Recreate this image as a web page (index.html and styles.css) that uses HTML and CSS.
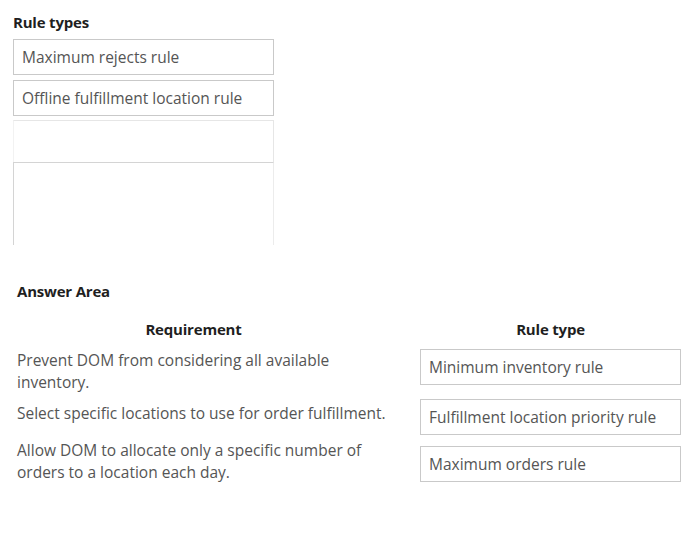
FILE: index.html
```html
<!DOCTYPE html>
<html>
<head>
<meta charset="utf-8">
<link rel="stylesheet" href="styles.css">
</head>
<body>
<div class="page">
  <section class="pool">
    <h2 class="title">Rule types</h2>
    <div class="slots">
      <div class="box">Maximum rejects rule</div>
      <div class="box">Offline fulfillment location rule</div>
      <div class="box empty faint"></div>
      <div class="box empty tall"></div>
    </div>
  </section>

  <section class="answer">
    <h2 class="title answer-title">Answer Area</h2>
    <div class="grid">
      <div class="col-head req-head">Requirement</div>
      <div class="col-head">Rule type</div>

      <div class="req r1">Prevent DOM from considering all available inventory.</div>
      <div class="box">Minimum inventory rule</div>

      <div class="req r2">Select specific locations to use for order fulfillment.</div>
      <div class="box">Fulfillment location priority rule</div>

      <div class="req r3">Allow DOM to allocate only a specific number of orders to a location each day.</div>
      <div class="box">Maximum orders rule</div>
    </div>
  </section>
</div>
</body>
</html>
```

FILE: styles.css
```css
html, body {
  margin: 0;
  padding: 0;
  background: #ffffff;
}
body {
  font-family: "Open Sans", "Noto Sans", "Liberation Sans", sans-serif;
  color: #555555;
  width: 700px;
  height: 544px;
  overflow: hidden;
}
.page {
  padding: 12px 0 0 13px;
}
.title {
  margin: 0;
  font-size: 15px;
  font-weight: 700;
  color: #1f1f1f;
  line-height: 20px;
  letter-spacing: -0.2px;
}
.slots {
  margin-top: 7px;
  width: 261px;
  display: flex;
  flex-direction: column;
  gap: 5px;
}
.box {
  box-sizing: border-box;
  height: 36px;
  border: 1px solid #c9c9c9;
  padding: 0 0 0 8px;
  display: flex;
  align-items: center;
  font-size: 15.5px;
  color: #555555;
  white-space: nowrap;
}
.slots .faint {
  height: 42px;
  margin-top: -1px;
  border-color: #e6e6e6;
  border-left-color: #f2f2f2;
  border-bottom: none;
}
.slots .tall {
  height: 83px;
  margin-top: -5px;
  border-color: #d4d4d4;
  border-bottom: none;
  border-right-color: #ececec;
}
.answer {
  margin-top: 36px;
  padding-left: 4px;
}
.grid {
  margin-top: 20px;
  display: grid;
  grid-template-columns: 403px 261px;
  grid-template-rows: 28px 50px 47px 40px;
}
.col-head {
  text-align: center;
  font-size: 15px;
  font-weight: 700;
  color: #1f1f1f;
  letter-spacing: -0.2px;
  line-height: 20px;
  margin-top: -2px;
}
.req-head {
  padding-right: 50px;
}
.req {
  font-size: 15.5px;
  line-height: 22px;
  width: 345px;
}
.req.r2 {
  width: 400px;
  margin-top: 3px;
}
.req.r3 {
  margin-top: -7px;
}
```
